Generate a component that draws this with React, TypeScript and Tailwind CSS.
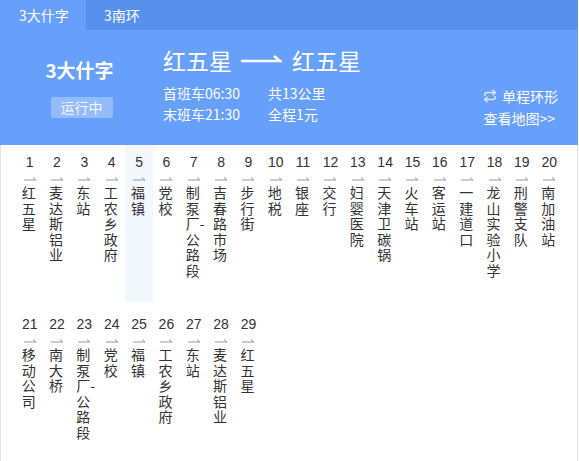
import { Repeat } from 'lucide-react'

const stations = [
  '红五星',
  '麦达斯铝业',
  '东站',
  '工农乡政府',
  '福镇',
  '党校',
  '制泵厂-公路段',
  '吉春路市场',
  '步行街',
  '地税',
  '银座',
  '交行',
  '妇婴医院',
  '天津卫碳锅',
  '火车站',
  '客运站',
  '一建道口',
  '龙山实验小学',
  '刑警支队',
  '南加油站',
  '移动公司',
  '南大桥',
  '制泵厂-公路段',
  '党校',
  '福镇',
  '工农乡政府',
  '东站',
  '麦达斯铝业',
  '红五星',
]

const cjk = "font-['Noto_Sans_CJK_SC','Noto_Sans',sans-serif]"

function StopArrow() {
  return (
    <svg width="14" height="6" viewBox="0 0 14 6" className="block">
      <path d="M1 5H13L10 2.5" fill="none" stroke="#9a9a9a" strokeWidth="1" />
    </svg>
  )
}

function Station({ index, name, current }: { index: number; name: string; current: boolean }) {
  return (
    <div className={`mb-[5px] flex h-[157px] flex-col items-center pt-[8px] ${current ? 'bg-[#f3f8ff]' : ''}`}>
      <span className="font-['Liberation_Sans',sans-serif] text-[14px] leading-[18px] text-[#333]">{index}</span>
      <div className="mt-[4px] mb-[4px]">
        <StopArrow />
      </div>
      <div className="w-[14px] translate-x-[-1px] break-all text-[14px] leading-[15.6px] text-[#333]">{name}</div>
    </div>
  )
}

export default function App() {
  return (
    <div className={`w-[578px] bg-white ${cjk}`}>
      <div className="flex h-[30px] bg-[#5791ec] text-[14px] text-white">
        <div className="flex w-[86px] items-center bg-[#66a0fa] pl-[19px]">3大什字</div>
        <div className="flex items-center pl-[18px]">3南环</div>
      </div>

      <div className="flex h-[115px] bg-[#66a0fa] text-white">
        <div className="flex w-[163px] flex-col items-center pt-[27px]">
          <div className="pr-[4px] text-[19px] font-bold leading-[26px]">3大什字</div>
          <div className="mt-[14px] flex h-[21px] w-[62px] items-center justify-center rounded-[2px] bg-[#94bbfb] text-[14px] text-[#f3f7ff]">
            运行中
          </div>
        </div>

        <div className="flex flex-col pt-[14px]">
          <div className="flex items-center text-[23px] leading-[32px]">
            <span>红五星</span>
            <svg width="42" height="12" viewBox="0 0 42 12" className="ml-[8px] mr-[10px] mt-[-4px]">
              <path d="M1 9H40L34 4" fill="none" stroke="#fff" strokeWidth="2.5" />
            </svg>
            <span>红五星</span>
          </div>
          <div className="mt-[7px] flex text-[14px] leading-[21px]">
            <div className="w-[105px]">
              <div>首班车06:30</div>
              <div>末班车21:30</div>
            </div>
            <div>
              <div>共13公里</div>
              <div>全程1元</div>
            </div>
          </div>
        </div>

        <div className="ml-auto flex flex-col items-end pr-[20px] pt-[55px] text-[14px] leading-[22px]">
          <div className="flex items-center">
            <Repeat size={14} strokeWidth={2.5} className="mr-[5px] text-[#dbe7fe]" />
            <span>单程环形</span>
          </div>
          <div className="mr-[3px]">查看地图&gt;&gt;</div>
        </div>
      </div>

      <div className="h-[316px] border-x border-[#e3e3e3] pl-[15px]">
        <div className="grid grid-cols-[repeat(20,27.35px)]">
          {stations.map((name, i) => (
            <Station key={i} index={i + 1} name={name} current={i === 4} />
          ))}
        </div>
      </div>
    </div>
  )
}
